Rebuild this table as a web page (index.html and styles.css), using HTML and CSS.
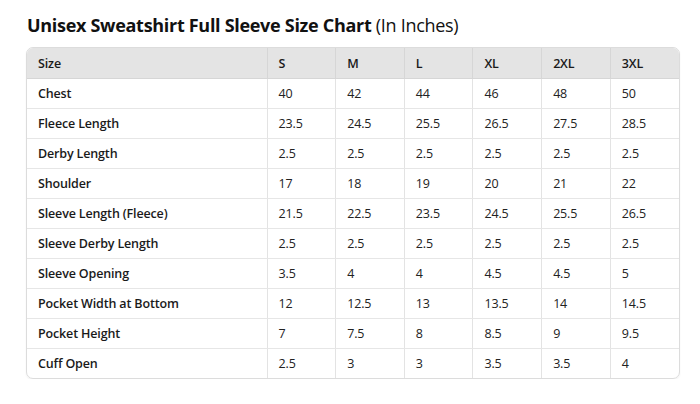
FILE: index.html
```html
<!DOCTYPE html>
<html>
<head>
<meta charset="utf-8">
<link rel="stylesheet" href="styles.css">
</head>
<body>
<div class="page">
  <h2 class="title"><strong>Unisex Sweatshirt Full Sleeve Size Chart</strong> (In Inches)</h2>
  <div class="table-wrap">
    <table class="chart">
      <colgroup>
        <col class="c-label"><col class="c-size"><col class="c-size"><col class="c-size"><col class="c-size"><col class="c-size"><col class="c-size">
      </colgroup>
      <thead>
        <tr><th>Size</th><th>S</th><th>M</th><th>L</th><th>XL</th><th>2XL</th><th>3XL</th></tr>
      </thead>
      <tbody>
        <tr><th>Chest</th><td>40</td><td>42</td><td>44</td><td>46</td><td>48</td><td>50</td></tr>
        <tr><th>Fleece Length</th><td>23.5</td><td>24.5</td><td>25.5</td><td>26.5</td><td>27.5</td><td>28.5</td></tr>
        <tr><th>Derby Length</th><td>2.5</td><td>2.5</td><td>2.5</td><td>2.5</td><td>2.5</td><td>2.5</td></tr>
        <tr><th>Shoulder</th><td>17</td><td>18</td><td>19</td><td>20</td><td>21</td><td>22</td></tr>
        <tr><th>Sleeve Length (Fleece)</th><td>21.5</td><td>22.5</td><td>23.5</td><td>24.5</td><td>25.5</td><td>26.5</td></tr>
        <tr><th>Sleeve Derby Length</th><td>2.5</td><td>2.5</td><td>2.5</td><td>2.5</td><td>2.5</td><td>2.5</td></tr>
        <tr><th>Sleeve Opening</th><td>3.5</td><td>4</td><td>4</td><td>4.5</td><td>4.5</td><td>5</td></tr>
        <tr><th>Pocket Width at Bottom</th><td>12</td><td>12.5</td><td>13</td><td>13.5</td><td>14</td><td>14.5</td></tr>
        <tr><th>Pocket Height</th><td>7</td><td>7.5</td><td>8</td><td>8.5</td><td>9</td><td>9.5</td></tr>
        <tr><th>Cuff Open</th><td>2.5</td><td>3</td><td>3</td><td>3.5</td><td>3.5</td><td>4</td></tr>
      </tbody>
    </table>
  </div>
</div>
</body>
</html>
```
FILE: styles.css
```css
html, body {
  margin: 0;
  padding: 0;
  background: #ffffff;
}
body {
  font-family: "Open Sans", "Noto Sans", sans-serif;
  color: #1a1a1a;
}
.page {
  padding: 12px 22px 0 26px;
}
.title {
  margin: 0 0 9px 1px;
  font-size: 18px;
  line-height: 26px;
  font-weight: 400;
  color: #111;
  letter-spacing: -0.3px;
}
.title strong {
  font-weight: 700;
}
.table-wrap {
  width: 652px;
  border: 1px solid #dcdcdc;
  border-radius: 7px;
  overflow: hidden;
  box-shadow: 0 1px 2px rgba(0,0,0,0.06);
}
.chart {
  width: 100%;
  border-collapse: collapse;
  table-layout: fixed;
  font-size: 12.5px;
  letter-spacing: -0.15px;
}
.c-label { width: 240px; }
.chart th, .chart td {
  height: 30px;
  padding: 1px 11px 0;
  box-sizing: border-box;
  text-align: left;
  border-right: 1px solid #e3e3e3;
  border-bottom: 1px solid #e6e6e6;
  vertical-align: middle;
}
.chart tr > :last-child { border-right: none; }
.chart tbody tr:last-child > * { border-bottom: none; }
.chart thead th {
  background: #e4e4e4;
  font-weight: 600;
  border-right-color: #d6d6d6;
  border-bottom-color: #d6d6d6;
}
.chart tbody th {
  font-weight: 600;
}
.chart td {
  font-weight: 400;
  color: #222;
}
```
